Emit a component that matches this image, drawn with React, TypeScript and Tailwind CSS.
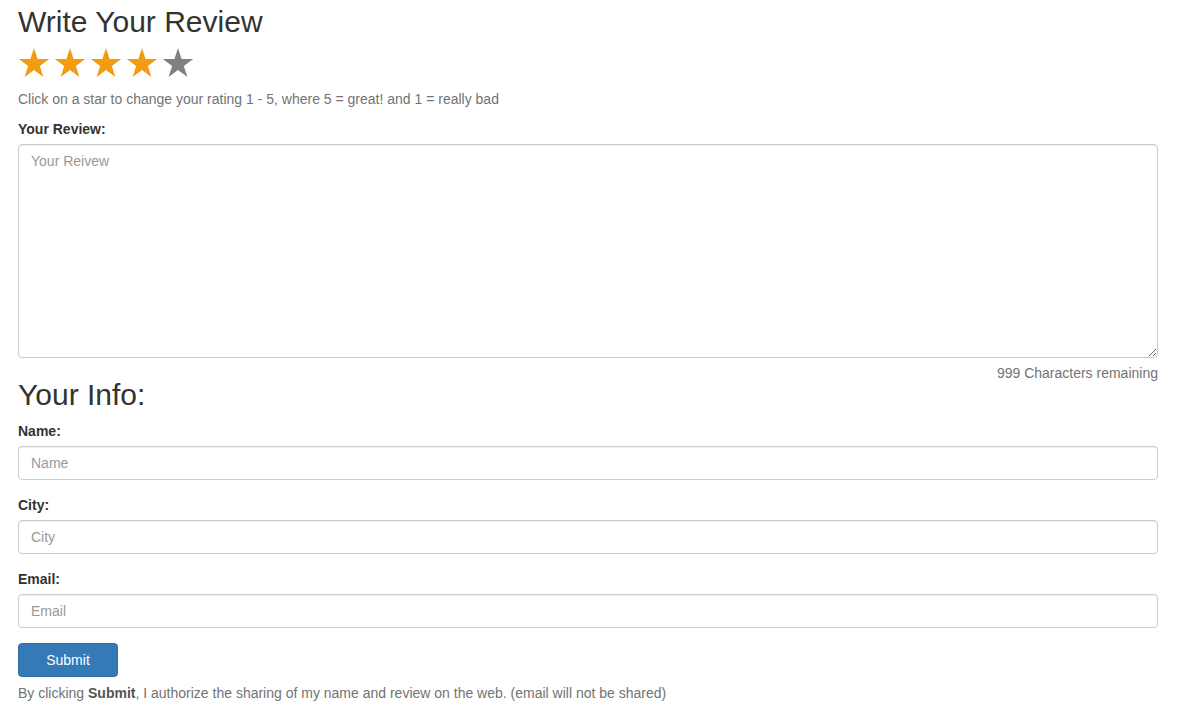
import { useState } from "react"

const STAR = "16,0 19.6,11.05 31.22,11.06 21.82,17.89 25.4,28.94 16,22.12 6.6,28.94 10.18,17.89 0.78,11.06 12.4,11.05"

function Star({ filled, onClick }: { filled: boolean; onClick: () => void }) {
  return (
    <svg width="32" height="30" viewBox="0 0 32 30" className="mr-[4px] cursor-pointer" onClick={onClick}>
      <polygon points={STAR} fill={filled ? "#f39c12" : "#808080"} />
    </svg>
  )
}

const inputCls =
  "block w-full h-[34px] px-[12px] py-[6px] text-[14px] text-[#555] bg-white border border-[#ccc] rounded-[4px] shadow-[inset_0_1px_1px_rgba(0,0,0,0.075)] outline-none placeholder:text-[#999]"

export default function App() {
  const [rating, setRating] = useState(4)
  const [review, setReview] = useState("")

  return (
    <div className="w-[1140px] ml-[18px] font-['Liberation_Sans',Arial,sans-serif] text-[14px] leading-[20px] text-[#333]">
      <h2 className="pt-[5px] text-[30px] leading-[33px] font-normal">Write Your Review</h2>

      <div className="flex mt-[10px]">
        {[1, 2, 3, 4, 5].map((n) => (
          <Star key={n} filled={n <= rating} onClick={() => setRating(n)} />
        ))}
      </div>
      <p className="mt-[11px] text-[#737373]">Click on a star to change your rating 1 - 5, where 5 = great! and 1 = really bad</p>

      <label className="block mt-[10px] mb-[5px] font-bold">Your Review:</label>
      <textarea
        value={review}
        maxLength={999}
        onChange={(e) => setReview(e.target.value)}
        placeholder="Your Reivew"
        className="block w-full h-[214px] px-[12px] py-[6px] text-[14px] leading-[20px] text-[#555] border border-[#ccc] rounded-[4px] shadow-[inset_0_1px_1px_rgba(0,0,0,0.075)] outline-none placeholder:text-[#999]"
      />
      <div className="mt-[5px] text-right text-[#737373]">{999 - review.length} Characters remaining</div>

      <h2 className="-mt-[5px] mb-[10px] text-[30px] leading-[33px] font-normal">Your Info:</h2>

      <label className="block mb-[5px] font-bold">Name:</label>
      <input className={inputCls} placeholder="Name" />

      <label className="block mt-[15px] mb-[5px] font-bold">City:</label>
      <input className={inputCls} placeholder="City" />

      <label className="block mt-[15px] mb-[5px] font-bold">Email:</label>
      <input className={inputCls} placeholder="Email" />

      <button className="mt-[15px] w-[100px] h-[34px] bg-[#337ab7] border border-[#2e6da4] rounded-[4px] text-white text-[14px]">
        Submit
      </button>
      <p className="mt-[6px] text-[#737373]">
        By clicking <b className="text-[#555]">Submit</b>, I authorize the sharing of my name and review on the web. (email will not be shared)
      </p>
    </div>
  )
}
